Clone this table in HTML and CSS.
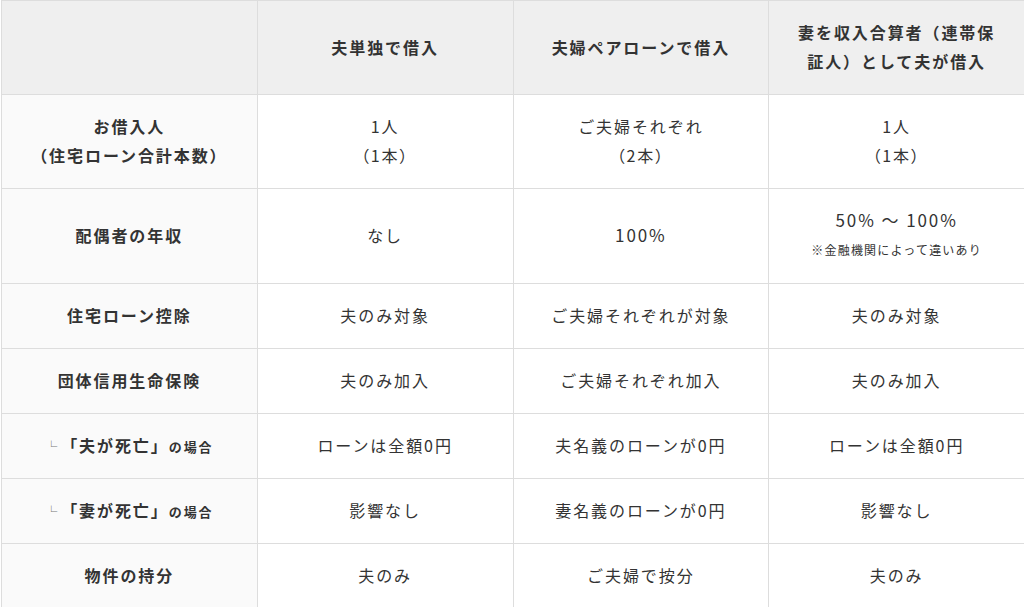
FILE: index.html
```html
<!DOCTYPE html>
<html lang="ja">
<head>
<meta charset="utf-8">
<link rel="stylesheet" href="styles.css">
</head>
<body>
<table class="cmp">
  <thead>
    <tr>
      <th class="corner"></th>
      <th>夫単独で借入</th>
      <th>夫婦ペアローンで借入</th>
      <th>妻を収入合算者（連帯保<br>証人）として夫が借入</th>
    </tr>
  </thead>
  <tbody>
    <tr>
      <th>お借入人<br>（住宅ローン合計本数）</th>
      <td>1人<br><span class="palt">（1本）</span></td>
      <td>ご夫婦それぞれ<br><span class="palt">（2本）</span></td>
      <td>1人<br><span class="palt">（1本）</span></td>
    </tr>
    <tr>
      <th>配偶者の年収</th>
      <td>なし</td>
      <td><span class="num">100%</span></td>
      <td><span class="num">50% ～ 100%</span><span class="note">※金融機関によって違いあり</span></td>
    </tr>
    <tr>
      <th>住宅ローン控除</th>
      <td>夫のみ対象</td>
      <td>ご夫婦それぞれが対象</td>
      <td>夫のみ対象</td>
    </tr>
    <tr>
      <th>団体信用生命保険</th>
      <td>夫のみ加入</td>
      <td>ご夫婦それぞれ加入</td>
      <td>夫のみ加入</td>
    </tr>
    <tr>
      <th><span class="sub">└</span>「夫が死亡」<span class="small">の場合</span></th>
      <td>ローンは全額0円</td>
      <td>夫名義のローンが0円</td>
      <td>ローンは全額0円</td>
    </tr>
    <tr>
      <th><span class="sub">└</span>「妻が死亡」<span class="small">の場合</span></th>
      <td>影響なし</td>
      <td>妻名義のローンが0円</td>
      <td>影響なし</td>
    </tr>
    <tr>
      <th>物件の持分</th>
      <td>夫のみ</td>
      <td>ご夫婦で按分</td>
      <td>夫のみ</td>
    </tr>
  </tbody>
</table>
</body>
</html>
```

FILE: styles.css
```css
html, body {
  margin: 0;
  padding: 0;
  background: #ffffff;
}

body {
  font-family: "Noto Sans CJK JP", "Noto Sans", sans-serif;
  color: #333333;
  overflow: hidden;
}

.cmp {
  border-collapse: collapse;
  table-layout: fixed;
  width: 1024px;
  margin-left: 1px;
}

.cmp th,
.cmp td {
  border: 1px solid #dddddd;
  text-align: center;
  vertical-align: middle;
  font-size: 16px;
  line-height: 29px;
  letter-spacing: 0.12em;
  padding: 17px 10px 18px;
}

.cmp th {
  font-weight: bold;
}

.cmp thead th {
  background: #efefef;
}

.cmp tbody th {
  background: #fafafa;
}

.cmp td {
  font-weight: normal;
  background: #ffffff;
}

.palt {
  font-feature-settings: "palt";
}

.num {
  font-size: 17px;
  line-height: 1;
}

.note {
  display: block;
  font-size: 12px;
  line-height: 30px;
  letter-spacing: 0.1em;
}

.sub {
  font-weight: normal;
  font-size: 12px;
  line-height: 1;
  color: #777777;
  margin-right: 2px;
}

.small {
  font-size: 13px;
  line-height: 1;
}
```
